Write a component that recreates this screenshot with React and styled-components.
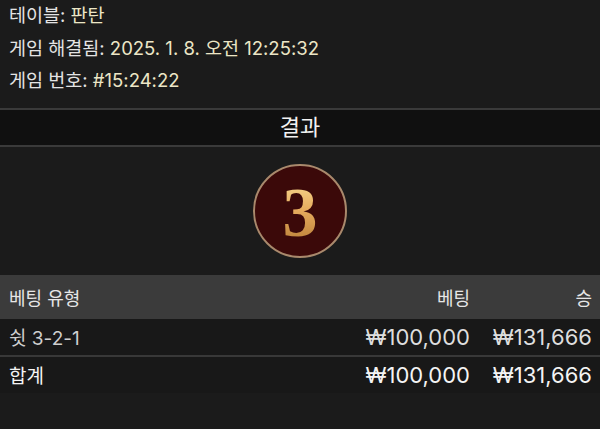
import React from 'react'
import styled, { createGlobalStyle } from 'styled-components'

const GlobalStyle = createGlobalStyle`
  html, body {
    margin: 0;
    padding: 0;
    background: #1b1b1b;
  }
  body {
    font-family: Inter, "Noto Sans CJK KR", sans-serif;
    color: #e2e2e2;
  }
`

const info = [
  { label: '테이블:', value: '판탄' },
  { label: '게임 해결됨:', value: '2025. 1. 8. 오전 12:25:32' },
  { label: '게임 번호:', value: '#15:24:22' },
]

const bets = [{ type: '쉿 3-2-1', bet: '₩100,000', win: '₩131,666' }]
const total = { bet: '₩100,000', win: '₩131,666' }

const App = () => {
  return (
    <Page>
      <GlobalStyle />
      <InfoList>
        {info.map((item) => (
          <InfoLine key={item.label}>
            <Label>{item.label}</Label> <Value>{item.value}</Value>
          </InfoLine>
        ))}
      </InfoList>
      <SectionTitle>결과</SectionTitle>
      <ResultArea>
        <Chip>
          <ChipNumber>3</ChipNumber>
        </Chip>
      </ResultArea>
      <Table>
        <HeadRow>
          <Cell>베팅 유형</Cell>
          <Cell $right>베팅</Cell>
          <Cell $right>승</Cell>
        </HeadRow>
        {bets.map((b) => (
          <Row key={b.type}>
            <Cell $dim>{b.type}</Cell>
            <Amount>{b.bet}</Amount>
            <Amount>{b.win}</Amount>
          </Row>
        ))}
        <Row $total>
          <Cell>합계</Cell>
          <Amount>{total.bet}</Amount>
          <Amount>{total.win}</Amount>
        </Row>
      </Table>
    </Page>
  )
}

export default App

const Page = styled.div`
  width: 600px;
  height: 429px;
  overflow: hidden;
  background: #1b1b1b;
`

const InfoList = styled.div`
  margin-top: -1px;
  padding: 0 9px 11px;
`

const InfoLine = styled.div`
  height: 32.5px;
  line-height: 32.5px;
  font-size: 18.5px;
  white-space: nowrap;
`

const Label = styled.span`
  color: #e4e4e4;
`

const Value = styled.span`
  color: #ece6c6;
`

const SectionTitle = styled.div`
  height: 35px;
  line-height: 35px;
  text-align: center;
  font-size: 22px;
  color: #f2f2f2;
  background: #101010;
  border-top: 2px solid #3a3a3a;
  border-bottom: 2px solid #3a3a3a;
`

const ResultArea = styled.div`
  display: flex;
  justify-content: center;
  padding: 17px 0 17px;
`

const Chip = styled.div`
  width: 90px;
  height: 90px;
  border-radius: 50%;
  border: 2px solid #a9896c;
  background: #3b0909;
  display: flex;
  align-items: center;
  justify-content: center;
`

const ChipNumber = styled.span`
  font-family: "Liberation Serif", serif;
  font-weight: 700;
  font-size: 70px;
  line-height: 1;
  margin-top: 4px;
  background: linear-gradient(180deg, #f8dc94 0%, #e6ac5e 45%, #b57a34 100%);
  -webkit-background-clip: text;
  background-clip: text;
  color: transparent;
`

const Table = styled.div`
  display: flex;
  flex-direction: column;
`

const HeadRow = styled.div`
  display: grid;
  grid-template-columns: 1fr 130px 122px;
  align-items: center;
  height: 44px;
  padding: 0 8px 0 9px;
  background: #3b3b3b;
  font-size: 18px;
  color: #e6e6e6;
`

const Row = styled.div`
  display: grid;
  grid-template-columns: 1fr 130px 122px;
  align-items: center;
  height: 36px;
  padding: 0 8px 0 9px;
  background: #181818;
  font-size: 19px;
  color: ${(p) => (p.$total ? '#f4f4f4' : '#dedede')};
  border-top: ${(p) => (p.$total ? '2px solid #383838' : 'none')};
`

const Cell = styled.div`
  text-align: ${(p) => (p.$right ? 'right' : 'left')};
  color: ${(p) => (p.$dim ? '#cfcfcf' : 'inherit')};
  white-space: nowrap;
`

const Amount = styled.div`
  text-align: right;
  font-size: 22px;
  white-space: nowrap;
`
